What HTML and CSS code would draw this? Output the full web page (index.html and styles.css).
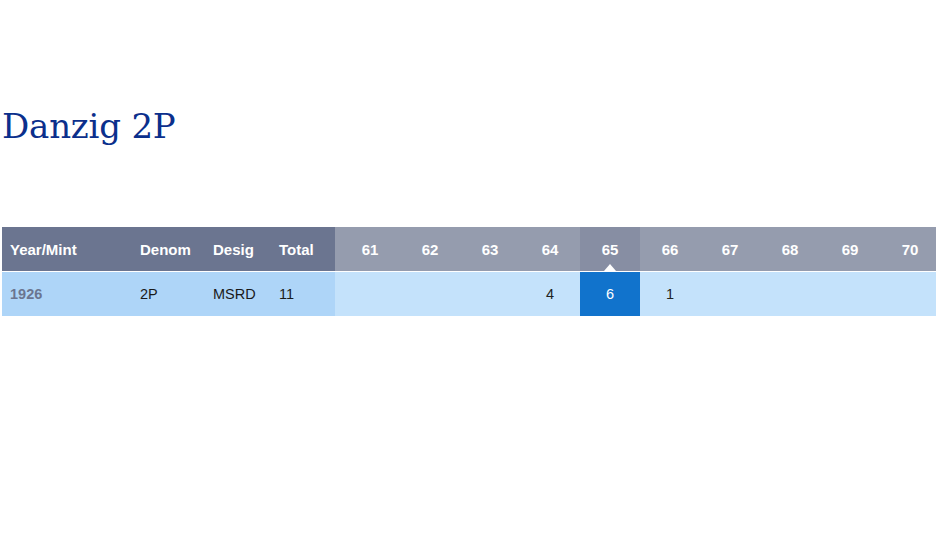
FILE: index.html
```html
<!DOCTYPE html>
<html>
<head>
<meta charset="utf-8">
<link rel="stylesheet" href="styles.css">
</head>
<body>
<div class="page">
  <h1 class="title">Danzig 2P</h1>
  <div class="pop">
    <div class="fixed">
      <div class="row head">
        <div class="c ym">Year/Mint</div>
        <div class="c dn">Denom</div>
        <div class="c ds">Desig</div>
        <div class="c tt">Total</div>
      </div>
      <div class="row data">
        <div class="c ym year">1926</div>
        <div class="c dn">2P</div>
        <div class="c ds">MSRD</div>
        <div class="c tt">11</div>
      </div>
    </div>
    <div class="grades">
      <div class="gtrack">
        <div class="grow head">
          <div class="g">61</div><div class="g">62</div><div class="g">63</div><div class="g">64</div><div class="g sel">65</div><div class="g">66</div><div class="g">67</div><div class="g">68</div><div class="g">69</div><div class="g">70</div>
        </div>
        <div class="grow data">
          <div class="g"></div><div class="g"></div><div class="g"></div><div class="g">4</div><div class="g sel">6</div><div class="g">1</div><div class="g"></div><div class="g"></div><div class="g"></div><div class="g"></div>
        </div>
      </div>
    </div>
  </div>
</div>
</body>
</html>
```
FILE: styles.css
```css
html, body {
  margin: 0;
  padding: 0;
  background: #ffffff;
}
.page {
  padding: 0 0 0 2px;
}
.title {
  margin: 0 0 79px 0;
  padding-top: 104px;
  font-family: "DejaVu Serif", Georgia, serif;
  font-weight: normal;
  font-size: 34px;
  line-height: 44px;
  color: #0b2f8c;
  letter-spacing: -0.2px;
}
.pop {
  display: flex;
  font-family: "Liberation Sans", Arial, sans-serif;
  font-size: 14.5px;
}
.fixed {
  width: 333px;
  flex: none;
}
.row {
  display: flex;
  align-items: center;
}
.row.head {
  height: 44px;
  background: #6b7590;
  color: #ffffff;
  font-weight: bold;
  font-size: 15px;
  border-bottom: 1px solid #ffffff;
}
.row.data {
  height: 44px;
  background: #aed5f8;
  color: #1a1a1a;
}
.c {
  box-sizing: border-box;
}
.ym { width: 138px; padding-left: 8px; }
.dn { width: 73px; }
.ds { width: 66px; }
.tt { width: 56px; }
.year {
  color: #6b7590;
  font-weight: bold;
}
.grades {
  flex: 1;
  overflow: hidden;
  min-width: 0;
}
.gtrack {
  width: 605px;
}
.grow {
  display: flex;
  padding-left: 5px;
}
.grow.head {
  height: 44px;
  background: #959cae;
  color: #ffffff;
  font-weight: bold;
  font-size: 15px;
  border-bottom: 1px solid #ffffff;
}
.grow.data {
  height: 44px;
  background: #c4e2fb;
  color: #222222;
}
.g {
  width: 60px;
  flex: none;
  display: flex;
  align-items: center;
  justify-content: center;
  position: relative;
}
.grow.head .g.sel {
  background: #878ea3;
}
.grow.head .g.sel::after {
  content: "";
  position: absolute;
  left: 24px;
  bottom: 0;
  border-left: 6px solid transparent;
  border-right: 6px solid transparent;
  border-bottom: 7px solid #ffffff;
}
.grow.data .g.sel {
  background: #1173cc;
  color: #ffffff;
}
```
